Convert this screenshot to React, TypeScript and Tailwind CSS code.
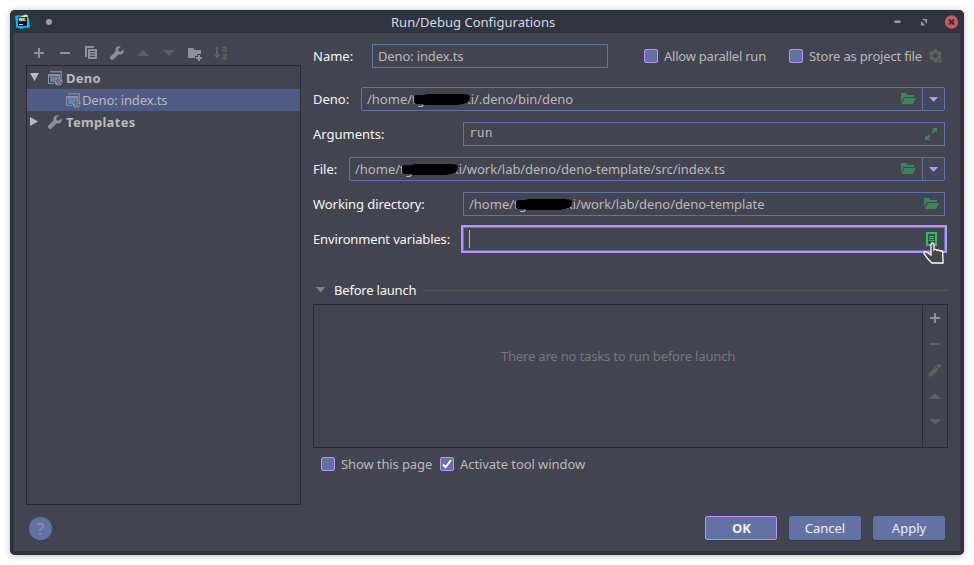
import type { ReactNode } from "react";

type IconProps = { d: string; className?: string; size?: number };

function Glyph({ d, className = "text-[#8e909b]", size = 16 }: IconProps) {
  return (
    <svg width={size} height={size} viewBox="0 0 16 16" className={`shrink-0 ${className}`} fill="currentColor" fillRule="evenodd">
      <path d={d} />
    </svg>
  );
}

const PLUS = "M7 3h2v4h4v2H9v4H7V9H3V7h4z";
const MINUS = "M3 7h10v2H3z";
const COPY = "M2 1h9v2H4v9H2zM5 4h9v10H5zM7 6v1h5V6zM7 8.5v1h5v-1zM7 11v1h5v-1z";
const WRENCH =
  "M14.6 4.2 12 6.8 9.7 6.3 9.2 4l2.6-2.6C9.8.7 7.7 1.4 6.8 3.2c-.5 1-.5 2.1-.1 3.1L1.5 11.5c-.7.7-.7 1.8 0 2.5l.5.5c.7.7 1.8.7 2.5 0l5.2-5.2c1 .4 2.1.4 3.1-.1 1.8-.9 2.5-3 1.8-5z";
const UP = "M2 11 8 5l6 6z";
const DOWN = "M2 5h12l-6 6z";
const FOLDER_ADD = "M1 3h5.2l1.6 2H14v4h-4v2H8v2H1zM11 10h2v2h2v2h-2v2h-2v-2H9v-2h2z";
const PENCIL = "M1.500 11.500l7-7 3 3-7 7h-3zM9.500 3.500l1.300-1.300c.7-.7 1.500-.7 2.200 0l.8.8c.7.7.7 1.500 0 2.200l-1.300 1.300z";
const GEAR =
  "M6.3 1h3.2l.4 2.1 1.3.7 2-.7 1.6 2.8L13.200 7.300v1.500L14.800 10.200 13.200 13l-2-.7-1.300.7-.4 2.100H6.300L5.900 13l-1.300-.7-2 .7L1 10.200l1.600-1.400V7.300L1 5.900l1.600-2.800 2 .7 1.300-.7zM7.900 5.500a2.500 2.500 0 1 0 0 5 2.500 2.500 0 0 0 0-5z";

function SortIcon() {
  return (
    <svg width="16" height="16" viewBox="0 0 16 16" className="shrink-0" fill="none" stroke="#5f5f5b">
      <path d="M4 2v9" strokeWidth="2" />
      <path d="M0.500 9.500h7L4 14z" fill="#5f5f5b" stroke="none" />
      <path d="M9.500 2.200h2.500q1.200 0 1.200 1.200V7M13.200 4.300h-2q-1.700 0-1.700 1.100t1.300 1.100q1.800 0 2.400-1" strokeWidth="1.400" />
      <path d="M9.300 9.700h4L9.700 13.500h4.300" strokeWidth="1.500" />
    </svg>
  );
}

function DenoIcon() {
  return (
    <svg width="16" height="16" viewBox="0 0 16 16" className="shrink-0">
      <path d="M3 1h12v7h-1.500V2.500H3z" fill="#7d8591" />
      <path d="M1 4h12v4h-1V6.500H2V13h5v1H1z" fill="#8b919c" />
      <path d="M3 7h8.500l-3 2.500L7.500 12H3z" fill="#4d86c8" />
      <circle cx="11.500" cy="11.500" r="4" fill="#8b919c" />
      <path d="M8.500 10.300l2 1 .3 1.800 1 1.600M10.800 8.300l-.2 1.700 1.900.6 1-1.500M12.500 12l1.800.5-1 1.500" fill="none" stroke="#454957" strokeWidth="0.900" />
    </svg>
  );
}

function OpenFolder() {
  return (
    <svg width="16" height="16" viewBox="0 0 16 16" className="shrink-0" fill="#3a8659">
      <path d="M1 2h5l1.500 2H14v2H4L1 11.500z" />
      <path d="M4.600 7H16l-3 6H1.600z" />
    </svg>
  );
}

function Caret() {
  return (
    <svg width="9" height="5" viewBox="0 0 9 5" fill="#bd93f9">
      <path d="M0 0h9L4.500 5z" />
    </svg>
  );
}

/* Path with the user name blacked out. */
function UserPath({ rest }: { rest: string }) {
  return (
    <span className="flex whitespace-pre">
      /home/
      <span className="relative flex w-[62px] justify-between">
        <span>tg</span>
        <span>ki</span>
        <svg className="absolute left-[1px] top-[3px]" width="60" height="14" viewBox="0 0 60 14">
          <path d="M1 4Q1 2 4 2L9 2.300 14 1 50 1Q57 1 57 4L56 8Q54 11 49 11L45 12H13Q10 12 9 11L3 11Q1 11 1 9z" fill="#000" />
        </svg>
      </span>
      <span className="tracking-[-0.05px]">{rest}</span>
    </span>
  );
}

function Check({ label, tracking, checked = false }: { label: string; tracking: string; checked?: boolean }) {
  return (
    <label className="flex items-center gap-1.5 text-[#bbbbbb]">
      <span className="flex size-3.5 items-center justify-center rounded-[2px] border border-[#bd93f9] bg-[#6272a4]">
        {checked && (
          <svg width="10" height="10" viewBox="0 0 10 10" fill="none" stroke="#ffffff" strokeWidth="2">
            <path d="M1 5.500 3.600 8.300 9 1" />
          </svg>
        )}
      </span>
      <span className={`whitespace-nowrap ${tracking}`}>{label}</span>
    </label>
  );
}

function Row({ label, width, children }: { label: string; width: string; children: ReactNode }) {
  return (
    <div className="flex h-6 w-[632px] items-center">
      <div className={`${width} shrink-0 whitespace-nowrap text-[#f8f8f2]`}>{label}</div>
      {children}
    </div>
  );
}

function Combo({ rest }: { rest: string }) {
  return (
    <div className="flex h-6 flex-1 items-center rounded-[2px] border border-[#6272a4] pl-[5px]">
      <UserPath rest={rest} />
      <div className="ml-auto mr-1.5"><OpenFolder /></div>
      <div className="flex h-full w-[22px] items-center justify-center border-l border-[#6272a4] bg-[#44475a]"><Caret /></div>
    </div>
  );
}

function DialogButton({ label, primary = false }: { label: string; primary?: boolean }) {
  return (
    <button
      className={`h-6 w-[72px] rounded-[2px] border bg-[#6272a4] leading-[22px] text-[#f0f0ee] shadow-[0_1px_1px_#363844] ${primary ? "border-[#bd93f9] pl-px font-bold" : "border-[#6272a4]"}`}
    >
      {label}
    </button>
  );
}

export default function App() {
  return (
    <div className="h-[565px] w-[974px] overflow-hidden bg-white p-2.5 font-['Noto_Sans',sans-serif] text-[13px] leading-[18px]">
      <div className="flex h-[545px] w-[954px] flex-col rounded-[5px] bg-[#2f343f] px-1 pb-1 shadow-[0_1px_7px_rgba(0,0,0,0.25),inset_0_0_0_1px_#292d37]">
        <header className="flex h-[23px] shrink-0 items-center">
          <svg width="16" height="16" viewBox="0 0 16 16" className="ml-px">
            <path d="M0 2 4 1l3 1 5-1 2 4-1 4 1.500 4-5.500 1-2 1-4-1-2-1L1 8z" fill="#00b7ec" />
            <path d="M6 2 11 0.500 13 1.500 12 4H7z" fill="#e7ee43" />
            <path d="M12 4h2v4l1 5-3 1z" fill="#13c9ed" />
            <path d="M3 3h9v9H3z" fill="#11141a" />
            <path d="M4 3.500h7v4H4z" fill="#4c5156" />
            <text x="3.400" y="7.300" fontSize="4.200" fontWeight="700" fill="#fff">WS</text>
            <path d="M4 10h4v1H4z" fill="#c7d3db" />
          </svg>
          <span className="ml-[15px] size-1.5 rounded-full bg-[#9a9ea8]" />
          <h1 className="ml-[339px] whitespace-nowrap tracking-[0.02px] text-[#d3dae3]">Run/Debug Configurations</h1>
          <svg width="68" height="16" viewBox="0 0 68 16" className="ml-auto" fill="#9a9ea8">
            <path d="M2.500 6.500h6V9h-6z" />
            <path d="M30.500 5h4.500v4.500L33.500 9V6.500h-2.500zM29 7l4 4-1 .5h-3z" />
            <circle cx="59.500" cy="8" r="6.700" fill="#cc575d" />
            <path d="m57 5.500 5 5m0-5-5 5" stroke="#2f343f" strokeWidth="2" />
          </svg>
        </header>

        <main className="flex h-[518px] flex-col bg-[#424450]">
          <div className="flex h-[472px]">
            <aside className="ml-3 w-[275px] shrink-0">
              <div className="flex h-8 items-center gap-2.5 pl-[5px] pt-2">
                <Glyph d={PLUS} />
                <Glyph d={MINUS} />
                <Glyph d={COPY} />
                <Glyph d={WRENCH} />
                <Glyph d={UP} className="text-[#5f5f5b]" />
                <Glyph d={DOWN} className="text-[#5f5f5b]" />
                <Glyph d={FOLDER_ADD} />
                <SortIcon />
              </div>
              <div className="h-[440px] border border-[#282a36] pt-px text-[#bbbbbb]">
                <div className="flex h-[22px] items-center pl-[3px]">
                  <svg width="10" height="8" viewBox="0 0 10 8" className="mb-0.5" fill="#bbbbbb"><path d="M0 0h9L4.500 8z" /></svg>
                  <span className="ml-[7px]"><DenoIcon /></span>
                  <span className="ml-[3px] font-bold tracking-[0.25px]">Deno</span>
                </div>
                <div className="flex h-[22px] items-center bg-[#4e5b85] pl-[38px]">
                  <DenoIcon />
                  <span className="ml-px tracking-[-0.14px]">Deno: index.ts</span>
                </div>
                <div className="flex h-[22px] items-center pl-[3px]">
                  <svg width="10" height="9" viewBox="0 0 10 9" className="mb-0.5" fill="#bbbbbb"><path d="M0 0v9l8-4.500z" /></svg>
                  <span className="ml-[7px]"><Glyph d={WRENCH} /></span>
                  <span className="ml-[3px] font-bold tracking-[0.3px]">Templates</span>
                </div>
              </div>
            </aside>

            <section className="ml-3 w-[635px] shrink-0 pt-[11px]">
              <div className="flex h-6 items-center">
                <div className="w-[59px] text-[#f8f8f2]">Name:</div>
                <div className="flex h-6 w-[236px] items-center border border-[#6272a4] pl-[5px] tracking-[-0.14px] text-[#bbbbbb]">Deno: index.ts</div>
                <div className="ml-9 w-[145px]"><Check label="Allow parallel run" tracking="tracking-[-0.23px]" /></div>
                <Check label="Store as project file" tracking="tracking-[-0.19px]" />
                <svg width="15" height="16" viewBox="0 0 16 17" className="ml-1.5" fill="#5f5f5b" fillRule="evenodd">
                  <path d={GEAR} />
                  <path d="M9 13h7l-3.500 3.500z" />
                </svg>
              </div>

              <div className="mt-[19px] flex flex-col gap-[11px] text-[#bbbbbb]">
                <Row label="Deno:" width="w-12"><Combo rest="/.deno/bin/deno" /></Row>
                <Row label="Arguments:" width="w-[150px]">
                  <div className="flex h-6 flex-1 items-center border border-[#6272a4] pl-[5px] pr-[5px]">
                    <span className="mb-0.5 font-['DejaVu_Sans_Mono',monospace] text-[13px]">run</span>
                    <svg width="16" height="16" viewBox="0 0 16 16" className="ml-auto" fill="#3a8659">
                      <path d="M9 2h5v5l-1.700-1.700L9.700 8 8 6.300l2.700-2.600zM2 9l1.700 1.700L6.300 8 8 9.700l-2.700 2.600L7 14H2z" />
                      <path d="m7 7 2 2" stroke="#424450" strokeWidth="3" />
                    </svg>
                  </div>
                </Row>
                <Row label="File:" width="w-9"><Combo rest="/work/lab/deno/deno-template/src/index.ts" /></Row>
                <Row label="Working directory:" width="w-[150px] tracking-[-0.06px]">
                  <div className="flex h-6 flex-1 items-center border border-[#6272a4] pl-[5px] pr-[5px] tracking-normal">
                    <UserPath rest="/work/lab/deno/deno-template" />
                    <span className="ml-auto"><OpenFolder /></span>
                  </div>
                </Row>
                <Row label="Environment variables:" width="w-[150px] tracking-[-0.14px]">
                  <div className="relative flex h-6 flex-1 items-center border border-[#6272a4] pl-[5px] pr-[5px] shadow-[0_0_0_2px_#bd93f9]">
                    <span className="h-[18px] w-px bg-[#bbbbbb]" />
                    <svg width="16" height="16" viewBox="0 0 16 16" className="ml-auto">
                      <path d="M4 2h9v12H4z" fill="none" stroke="#2fbf62" strokeWidth="2" />
                      <path d="M6 5.500h5M6 7.500h5M6 9.500h5" stroke="#2fbf62" />
                    </svg>
                    <svg width="22" height="24" viewBox="0 0 22 24" className="absolute left-[459px] top-[14px]">
                      <path d="M8 13V3.500Q8 1 9.500 1T11 3.500V8q1.500-1.500 3 .3 1.500-1 2.700.7 1.500-.8 3 1L20 17v4H9L5 17l-4-5.500Q1 9.500 3 9.800z" fill="#474747" stroke="#fff" strokeWidth="1.300" />
                    </svg>
                  </div>
                </Row>
              </div>

              <div className="mt-[30px] flex h-[18px] items-center">
                <svg width="9" height="6" viewBox="0 0 9 6" className="ml-[3px]" fill="#80828d"><path d="M0 0h9L4.500 5.500z" /></svg>
                <span className="ml-[9px] w-[88px] whitespace-nowrap tracking-[-0.2px] text-[#f8f8f2]">Before launch</span>
                <span className="h-px flex-1 bg-[#555553]" />
              </div>
              <div className="mt-[5px] flex h-[144px] border border-[#282a36]">
                <div className="flex-1 pt-[42px] text-center tracking-[-0.17px] text-[#777777]">There are no tasks to run before launch</div>
                <div className="flex w-[25px] flex-col items-center gap-2.5 border-l border-[#282a36] pt-[5px]">
                  <Glyph d={PLUS} />
                  <Glyph d={MINUS} className="text-[#5f5f5b]" />
                  <Glyph d={PENCIL} className="text-[#5f5f5b]" />
                  <Glyph d={UP} className="text-[#5f5f5b]" />
                  <Glyph d={DOWN} className="text-[#5f5f5b]" />
                </div>
              </div>
              <div className="mt-[7px] flex pl-2">
                <div className="w-[119px]"><Check label="Show this page" tracking="tracking-[-0.11px]" /></div>
                <Check label="Activate tool window" tracking="tracking-[-0.07px]" checked />
              </div>
            </section>
          </div>

          <footer className="flex h-[46px] items-start gap-3 pl-[15px] pr-[15px] pt-[11px]">
            <button className="mr-auto mt-px flex size-[23px] items-center justify-center rounded-full bg-[#6272a4] text-[16px] font-medium text-[#8d909d]">?</button>
            <DialogButton label="OK" primary />
            <DialogButton label="Cancel" />
            <DialogButton label="Apply" />
          </footer>
        </main>
      </div>
    </div>
  );
}
